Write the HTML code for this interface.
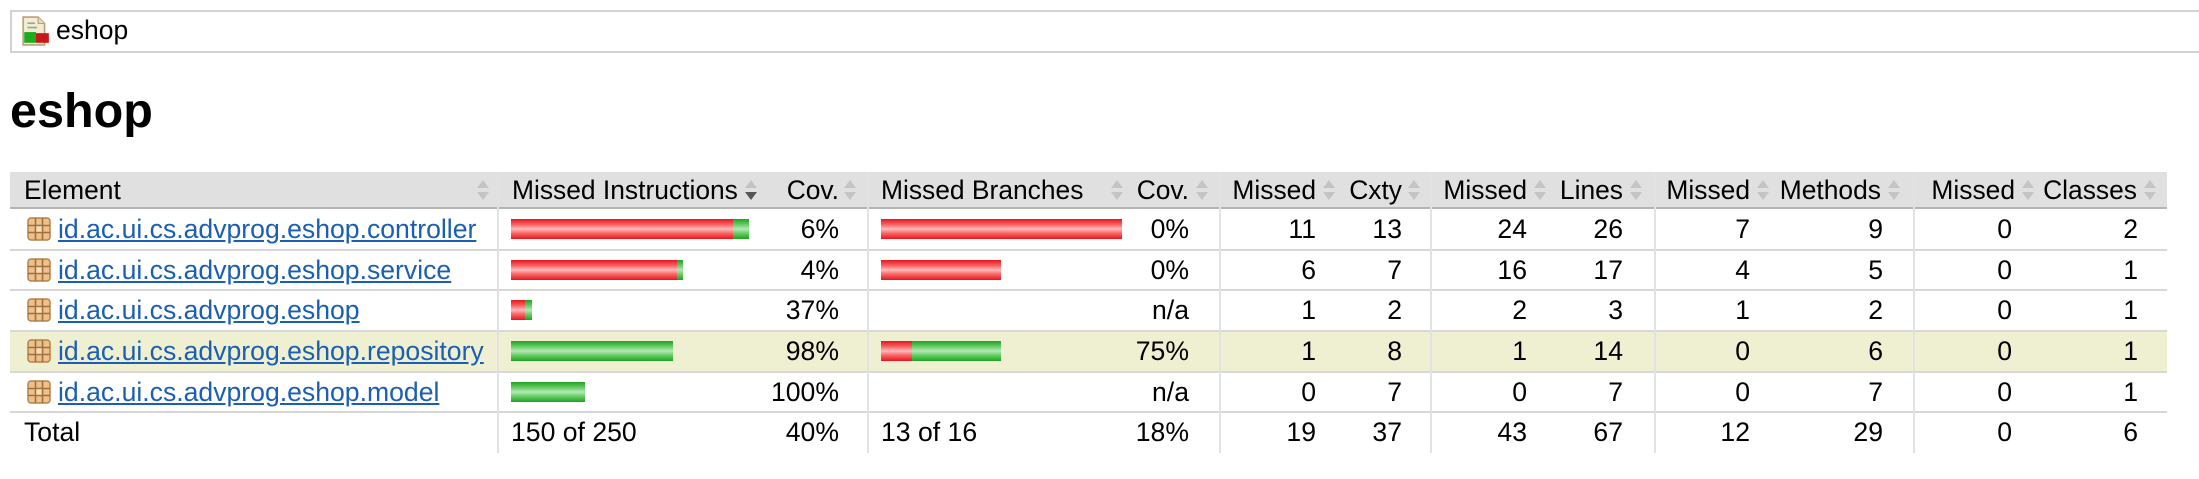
<!DOCTYPE html>
<html><head><meta charset="utf-8"><style>
*{margin:0;padding:0;box-sizing:border-box}
body{width:2199px;height:479px;background:#fff;position:relative;overflow:hidden;font-family:"Liberation Sans",Arial,sans-serif;color:#000}
.a{position:absolute;white-space:nowrap}
.t{position:absolute;font-size:26.6px;line-height:41px;height:41px;white-space:nowrap}
.h{position:absolute;font-size:26.4px;line-height:36px;top:172px;white-space:nowrap}
.r{text-align:right}
a{color:#1a5fb4;text-decoration:underline}
.rb{position:absolute;height:20px;background:linear-gradient(#e8141b 0%,#f86a6a 30%,#fbb 50%,#f86a6a 70%,#e8141b 100%)}
.gb{position:absolute;height:20px;background:linear-gradient(#1ea21e 0%,#6cd06c 30%,#b5e8b5 50%,#6cd06c 70%,#1ea21e 100%)}
.vl{position:absolute;top:172px;height:281px;width:2px;background:#e2e2e2}
.hl{position:absolute;left:10px;width:2157px;height:2px;background:#d8d8d8}
.ar{position:absolute;width:14px;height:24px}
</style></head><body>
<div class="a" style="left:10px;top:10px;width:2200px;height:43px;border-top:2px solid #d2d2d2;border-bottom:2px solid #d2d2d2;border-left:2px solid #d2d2d2"></div>
<svg class="a" style="left:21px;top:16px" width="30" height="30" viewBox="0 0 28 28">
<path d="M2 1h14l6 6v20H2z" fill="#f4ecd0" stroke="#b9a27a" stroke-width="1.5"/>
<path d="M16 1v6h6" fill="#e6d9b0" stroke="#b9a27a" stroke-width="1"/>
<rect x="6" y="6" width="7" height="1.5" fill="#8aa"/><rect x="6" y="10" width="9" height="1.5" fill="#8aa"/>
<rect x="3" y="15" width="11" height="10" fill="#1faa1f"/><rect x="14" y="16" width="12" height="9" fill="#c81818"/>
</svg>
<div class="a" style="left:56px;top:13px;font-size:26.5px;line-height:34px">eshop</div>
<div class="a" style="left:10px;top:84px;font-size:48.5px;font-weight:bold;line-height:54px">eshop</div>
<div class="a" style="left:10px;top:172px;width:2157px;height:36px;background:#e0e0e0"></div>
<div class="a" style="left:10px;top:207px;width:2157px;height:2px;background:#b4b4b4"></div>
<div class="a" style="left:10px;top:331px;width:2157px;height:41px;background:#efefd2"></div>
<div class="hl" style="top:249px"></div><div class="hl" style="top:289px"></div><div class="hl" style="top:330px"></div><div class="hl" style="top:371px"></div><div class="hl" style="top:411px"></div>
<div class="vl" style="left:497px"></div><div class="vl" style="left:867px"></div><div class="vl" style="left:1219px"></div><div class="vl" style="left:1430px"></div><div class="vl" style="left:1654px"></div><div class="vl" style="left:1913px"></div>
<svg width="0" height="0" style="position:absolute"><defs>
<g id="s"><path d="M7 2L13 10H1z" fill="#c4c4c4"/><path d="M7 22L13 14H1z" fill="#c4c4c4"/></g>
<g id="sd"><path d="M7 2L13 10H1z" fill="#c4c4c4"/><path d="M7 22L13 14H1z" fill="#555"/></g>
<g id="pk"><rect x="1" y="1" width="22" height="22" rx="3" fill="#edc08c" stroke="#b5824c" stroke-width="1.5"/><path d="M8.5 1v22M15.5 1v22M1 8.5h22M1 15.5h22" stroke="#a0703c" stroke-width="1.6"/><rect x="9.3" y="9.3" width="5.4" height="5.4" fill="#f6dcb8"/></g>
</defs></svg>
<div class="h" style="left:24px">Element</div><svg class="ar" style="left:476px;top:178px"><use href="#s"/></svg>
<div class="h" style="left:512px">Missed Instructions</div><svg class="ar" style="left:744px;top:178px"><use href="#sd"/></svg>
<div class="h r" style="right:1360px">Cov.</div><svg class="ar" style="left:843px;top:178px"><use href="#s"/></svg>
<div class="h" style="left:881px">Missed Branches</div><svg class="ar" style="left:1110px;top:178px"><use href="#s"/></svg>
<div class="h r" style="right:1010px">Cov.</div><svg class="ar" style="left:1195px;top:178px"><use href="#s"/></svg>
<div class="h r" style="right:883px">Missed</div><svg class="ar" style="left:1322px;top:178px"><use href="#s"/></svg>
<div class="h r" style="right:797px">Cxty</div><svg class="ar" style="left:1407px;top:178px"><use href="#s"/></svg>
<div class="h r" style="right:672px">Missed</div><svg class="ar" style="left:1533px;top:178px"><use href="#s"/></svg>
<div class="h r" style="right:576px">Lines</div><svg class="ar" style="left:1629px;top:178px"><use href="#s"/></svg>
<div class="h r" style="right:449px">Missed</div><svg class="ar" style="left:1756px;top:178px"><use href="#s"/></svg>
<div class="h r" style="right:318px">Methods</div><svg class="ar" style="left:1887px;top:178px"><use href="#s"/></svg>
<div class="h r" style="right:184px">Missed</div><svg class="ar" style="left:2021px;top:178px"><use href="#s"/></svg>
<div class="h r" style="right:62px">Classes</div><svg class="ar" style="left:2143px;top:178px"><use href="#s"/></svg>

<svg class="a" style="left:27px;top:217px" width="24" height="24"><use href="#pk"/></svg>
<div class="t" style="left:58px;top:209px"><a>id.ac.ui.cs.advprog.eshop.controller</a></div>
<div class="rb" style="left:511px;top:219px;width:222px"></div><div class="gb" style="left:733px;top:219px;width:16px"></div>
<div class="t r" style="right:1360px;top:209px">6%</div>
<div class="rb" style="left:881px;top:219px;width:241px"></div>
<div class="t r" style="right:1010px;top:209px">0%</div>
<div class="t r" style="right:883px;top:209px">11</div><div class="t r" style="right:797px;top:209px">13</div>
<div class="t r" style="right:672px;top:209px">24</div><div class="t r" style="right:576px;top:209px">26</div>
<div class="t r" style="right:449px;top:209px">7</div><div class="t r" style="right:316px;top:209px">9</div>
<div class="t r" style="right:187px;top:209px">0</div><div class="t r" style="right:61px;top:209px">2</div>

<svg class="a" style="left:27px;top:258px" width="24" height="24"><use href="#pk"/></svg>
<div class="t" style="left:58px;top:250px"><a>id.ac.ui.cs.advprog.eshop.service</a></div>
<div class="rb" style="left:511px;top:260px;width:166px"></div><div class="gb" style="left:677px;top:260px;width:6px"></div>
<div class="t r" style="right:1360px;top:250px">4%</div>
<div class="rb" style="left:881px;top:260px;width:120px"></div>
<div class="t r" style="right:1010px;top:250px">0%</div>
<div class="t r" style="right:883px;top:250px">6</div><div class="t r" style="right:797px;top:250px">7</div>
<div class="t r" style="right:672px;top:250px">16</div><div class="t r" style="right:576px;top:250px">17</div>
<div class="t r" style="right:449px;top:250px">4</div><div class="t r" style="right:316px;top:250px">5</div>
<div class="t r" style="right:187px;top:250px">0</div><div class="t r" style="right:61px;top:250px">1</div>

<svg class="a" style="left:27px;top:298px" width="24" height="24"><use href="#pk"/></svg>
<div class="t" style="left:58px;top:290px"><a>id.ac.ui.cs.advprog.eshop</a></div>
<div class="rb" style="left:511px;top:300px;width:14px"></div><div class="gb" style="left:525px;top:300px;width:7px"></div>
<div class="t r" style="right:1360px;top:290px">37%</div>
<div class="t r" style="right:1010px;top:290px">n/a</div>
<div class="t r" style="right:883px;top:290px">1</div><div class="t r" style="right:797px;top:290px">2</div>
<div class="t r" style="right:672px;top:290px">2</div><div class="t r" style="right:576px;top:290px">3</div>
<div class="t r" style="right:449px;top:290px">1</div><div class="t r" style="right:316px;top:290px">2</div>
<div class="t r" style="right:187px;top:290px">0</div><div class="t r" style="right:61px;top:290px">1</div>

<svg class="a" style="left:27px;top:339px" width="24" height="24"><use href="#pk"/></svg>
<div class="t" style="left:58px;top:331px"><a>id.ac.ui.cs.advprog.eshop.repository</a></div>
<div class="gb" style="left:511px;top:341px;width:162px"></div>
<div class="t r" style="right:1360px;top:331px">98%</div>
<div class="rb" style="left:881px;top:341px;width:31px"></div><div class="gb" style="left:912px;top:341px;width:89px"></div>
<div class="t r" style="right:1010px;top:331px">75%</div>
<div class="t r" style="right:883px;top:331px">1</div><div class="t r" style="right:797px;top:331px">8</div>
<div class="t r" style="right:672px;top:331px">1</div><div class="t r" style="right:576px;top:331px">14</div>
<div class="t r" style="right:449px;top:331px">0</div><div class="t r" style="right:316px;top:331px">6</div>
<div class="t r" style="right:187px;top:331px">0</div><div class="t r" style="right:61px;top:331px">1</div>

<svg class="a" style="left:27px;top:380px" width="24" height="24"><use href="#pk"/></svg>
<div class="t" style="left:58px;top:372px"><a>id.ac.ui.cs.advprog.eshop.model</a></div>
<div class="gb" style="left:511px;top:382px;width:74px"></div>
<div class="t r" style="right:1360px;top:372px">100%</div>
<div class="t r" style="right:1010px;top:372px">n/a</div>
<div class="t r" style="right:883px;top:372px">0</div><div class="t r" style="right:797px;top:372px">7</div>
<div class="t r" style="right:672px;top:372px">0</div><div class="t r" style="right:576px;top:372px">7</div>
<div class="t r" style="right:449px;top:372px">0</div><div class="t r" style="right:316px;top:372px">7</div>
<div class="t r" style="right:187px;top:372px">0</div><div class="t r" style="right:61px;top:372px">1</div>

<div class="t" style="left:24px;top:412px">Total</div>
<div class="t" style="left:511px;top:412px">150 of 250</div>
<div class="t r" style="right:1360px;top:412px">40%</div>
<div class="t" style="left:881px;top:412px">13 of 16</div>
<div class="t r" style="right:1010px;top:412px">18%</div>
<div class="t r" style="right:883px;top:412px">19</div><div class="t r" style="right:797px;top:412px">37</div>
<div class="t r" style="right:672px;top:412px">43</div><div class="t r" style="right:576px;top:412px">67</div>
<div class="t r" style="right:449px;top:412px">12</div><div class="t r" style="right:316px;top:412px">29</div>
<div class="t r" style="right:187px;top:412px">0</div><div class="t r" style="right:61px;top:412px">6</div>
</body></html>
